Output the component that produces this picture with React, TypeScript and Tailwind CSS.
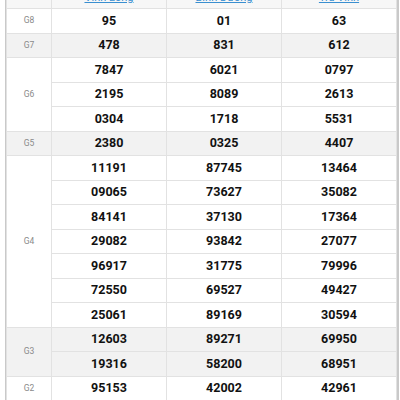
const provinces = ["Vĩnh Long", "Bình Dương", "Trà Vinh"];

type Prize = { label: string; values: string[][]; shaded?: boolean };

const prizes: Prize[] = [
  { label: "G8", values: [["95", "01", "63"]] },
  { label: "G7", values: [["478", "831", "612"]], shaded: true },
  {
    label: "G6",
    values: [
      ["7847", "6021", "0797"],
      ["2195", "8089", "2613"],
      ["0304", "1718", "5531"],
    ],
  },
  { label: "G5", values: [["2380", "0325", "4407"]], shaded: true },
  {
    label: "G4",
    values: [
      ["11191", "87745", "13464"],
      ["09065", "73627", "35082"],
      ["84141", "37130", "17364"],
      ["29082", "93842", "27077"],
      ["96917", "31775", "79996"],
      ["72550", "69527", "49427"],
      ["25061", "89169", "30594"],
    ],
  },
  {
    label: "G3",
    values: [
      ["12603", "89271", "69950"],
      ["19316", "58200", "68951"],
    ],
    shaded: true,
  },
  { label: "G2", values: [["95153", "42002", "42961"]] },
];

export default function App() {
  return (
    <div className="w-[400px] h-[400px] overflow-hidden bg-white font-['Roboto',sans-serif]">
      <div className="ml-[5px] w-[394px] -mt-[16px] border-l border-r-2 border-[#c9c9c9]">
        <table className="w-full table-fixed border-collapse">
          <colgroup>
            <col className="w-[45px]" />
            <col />
            <col />
            <col />
          </colgroup>
          <thead>
            <tr className="h-[24px] bg-[#f7f7f7]">
              <th className="border border-[#e2e2e2] pt-[2px] text-[9px] font-normal text-[#888] leading-none">
                Tỉnh
              </th>
              {provinces.map((p) => (
                <th key={p} className="border border-[#e2e2e2] pt-[2px] text-[11px] font-normal leading-none">
                  <a href="#" className="text-[#3a8fd0] underline">
                    {p}
                  </a>
                </th>
              ))}
            </tr>
          </thead>
          <tbody>
            {prizes.map((prize) =>
              prize.values.map((row, i) => (
                <tr
                  key={prize.label + i}
                  className={`h-[24.5px] ${prize.shaded ? "bg-[#f2f2f2]" : "bg-white"}`}
                >
                  {i === 0 && (
                    <td
                      rowSpan={prize.values.length}
                      className="border border-[#e2e2e2] text-center text-[8.5px] text-[#8a8a8a]"
                    >
                      {prize.label}
                    </td>
                  )}
                  {row.map((v, j) => (
                    <td
                      key={j}
                      className="border border-[#e2e2e2] text-center text-[12.5px] font-bold text-[#111] leading-none"
                    >
                      {v}
                    </td>
                  ))}
                </tr>
              ))
            )}
          </tbody>
        </table>
      </div>
    </div>
  );
}
